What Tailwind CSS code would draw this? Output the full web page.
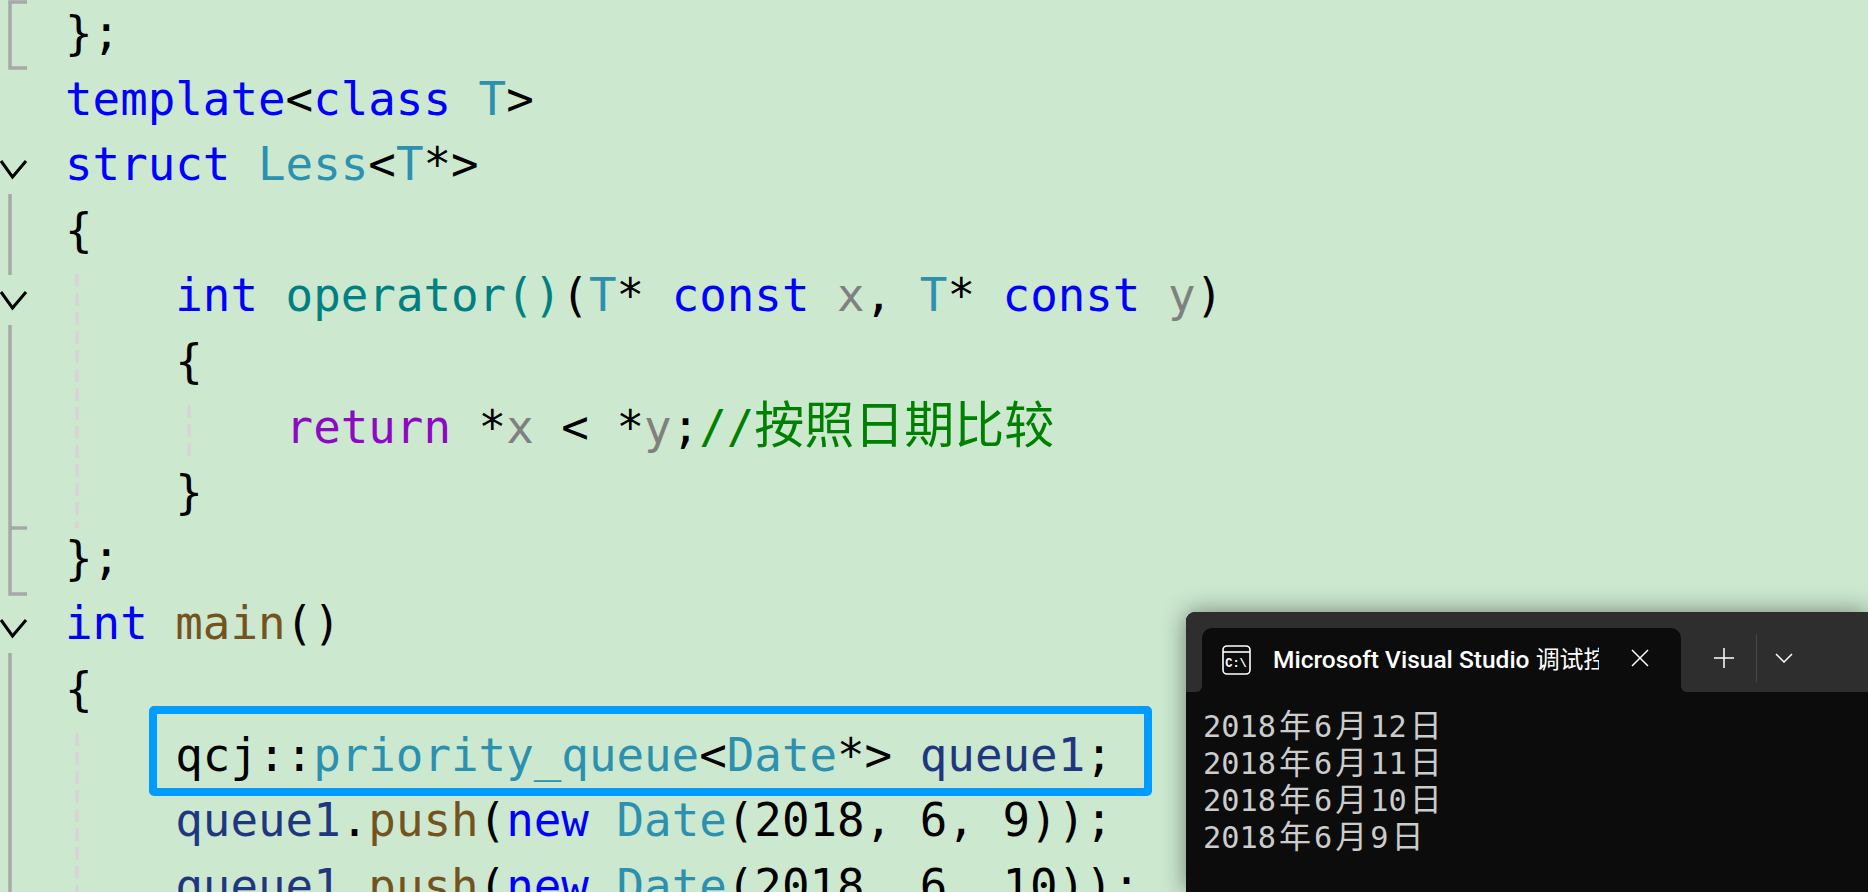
<!DOCTYPE html>
<html lang="zh">

<head>
    <meta charset="UTF-8">
    <title>priority_queue</title>
    <script src="https://cdn.jsdelivr.net/npm/@tailwindcss/browser@4"></script>
</head>

<body class="bg-[#cce8cf] h-screen overflow-hidden relative">
    <!-- Code -->
    <div class="flex flex-col pt-[1px] pl-[65px] font-['DejaVu_Sans_Mono','Noto_Sans_CJK_SC',monospace] text-[45.8px] leading-[65.6px] text-black whitespace-pre">
        <div class="h-[65.6px]">};</div>
        <div class="h-[65.6px]"><span class="text-[#0000ff]">template</span>&lt;<span class="text-[#0000ff]">class</span> <span class="text-[#2b91af]">T</span>&gt;</div>
        <div class="h-[65.6px]"><span class="text-[#0000ff]">struct</span> <span class="text-[#2b91af]">Less</span>&lt;<span class="text-[#2b91af]">T</span>*&gt;</div>
        <div class="h-[65.6px]">{</div>
        <div class="h-[65.6px]">    <span class="text-[#0000ff]">int</span> <span class="text-[#008080]">operator()</span>(<span class="text-[#2b91af]">T</span>* <span class="text-[#0000ff]">const</span> <span class="text-[#808080]">x</span>, <span class="text-[#2b91af]">T</span>* <span class="text-[#0000ff]">const</span> <span class="text-[#808080]">y</span>)</div>
        <div class="h-[65.6px]">    {</div>
        <div class="h-[65.6px]">        <span class="text-[#8f08c4]">return</span> *<span class="text-[#808080]">x</span> &lt; *<span class="text-[#808080]">y</span>;<span class="text-[#008000]">//<span class="font-['Noto_Sans_CJK_SC',sans-serif] text-[50px] leading-none">按照日期比较</span></span></div>
        <div class="h-[65.6px]">    }</div>
        <div class="h-[65.6px]">};</div>
        <div class="h-[65.6px]"><span class="text-[#0000ff]">int</span> <span class="text-[#74531f]">main</span>()</div>
        <div class="h-[65.6px]">{</div>
        <div class="h-[65.6px]">    qcj::<span class="text-[#2b91af]">priority_queue</span>&lt;<span class="text-[#2b91af]">Date</span>*&gt; <span class="text-[#1f377f]">queue1</span>;</div>
        <div class="h-[65.6px]">    <span class="text-[#1f377f]">queue1</span>.<span class="text-[#74531f]">push</span>(<span class="text-[#0000ff]">new</span> <span class="text-[#2b91af]">Date</span>(2018, 6, 9));</div>
        <div class="h-[65.6px]">    <span class="text-[#1f377f]">queue1</span>.<span class="text-[#74531f]">push</span>(<span class="text-[#0000ff]">new</span> <span class="text-[#2b91af]">Date</span>(2018, 6, 10));</div>
    </div>

    <!-- Fold margin and indent guides -->
    <svg class="absolute left-0 top-0" width="200" height="892" fill="none">
        <g stroke="#a8a8a8" stroke-width="3.5">
            <path d="M27 2H10V68H27" />
            <path d="M10 194V275" />
            <path d="M10 325V594H27M10 528H27" />
            <path d="M10 653V892" />
        </g>
        <g stroke="#000" stroke-width="3">
            <path d="M1 161L12.5 177L26 161" />
            <path d="M1 292L12.5 308L26 292" />
            <path d="M1 620L12.5 636L26 620" />
        </g>
        <g stroke="#d6d6d6" stroke-width="4" stroke-dasharray="13 6">
            <path d="M77 274V528" />
            <path d="M77 733V892" />
            <path d="M189 405V462" />
        </g>
    </svg>

    <!-- Highlight box -->
    <div class="absolute left-[149px] top-[706px] w-[1003px] h-[90px] border-[8px] border-[#009cff] rounded-[5px]"></div>

    <!-- Terminal window -->
    <div class="absolute left-[1186px] top-[612px] right-0 bottom-0 bg-[#0c0c0c] rounded-tl-[9px] shadow-[0_0_24px_rgba(0,0,0,0.45)] text-white">
        <div class="flex h-[80px]">
            <div class="w-[16px] bg-[#2e2e2e] rounded-tl-[9px] rounded-br-[6px]"></div>
            <div class="w-[479px] bg-[#2e2e2e]">
                <div class="mt-[16px] h-[64px] bg-[#0c0c0c] rounded-t-[10px] flex items-center pl-[20px]">
                    <svg width="29" height="30" viewBox="0 0 29 30" fill="none" stroke="#fff" stroke-width="1.6" class="shrink-0">
                        <rect x="1" y="1" width="27" height="28" rx="4" />
                        <path d="M1 7H28" />
                        <text x="14" y="21.5" text-anchor="middle" fill="#fff" stroke="none" font-family="Liberation Mono" font-weight="700" font-size="12">C:\</text>
                    </svg>
                    <div class="ml-[22px] w-[326px] overflow-hidden whitespace-nowrap font-['Roboto','Noto_Sans_CJK_SC',sans-serif] text-[24.5px] font-medium">Microsoft Visual Studio <span class="text-[24px] leading-none font-['Noto_Sans_CJK_SC',sans-serif] font-normal">调试控制台</span></div>
                    <svg width="18" height="18" viewBox="0 0 18 18" fill="none" stroke="#fff" stroke-width="1.5" class="ml-[32px] -mt-[4px]">
                        <path d="M1 1L17 17M17 1L1 17" />
                    </svg>
                </div>
            </div>
            <div class="flex-1 bg-[#2e2e2e] rounded-bl-[6px] flex items-center pt-[12px]">
                <svg width="20" height="20" viewBox="0 0 20 20" fill="none" stroke="#fff" stroke-width="1.5" class="ml-[33px]">
                    <path d="M10 0V20M0 10H20" />
                </svg>
                <div class="ml-[22px] h-[48px] w-[1px] bg-[#484848]"></div>
                <svg width="18" height="10" viewBox="0 0 18 10" fill="none" stroke="#fff" stroke-width="1.5" class="ml-[18px]">
                    <path d="M1 1L9 9L17 1" />
                </svg>
            </div>
        </div>
        <div class="flex flex-col pl-[17px] pt-[16px] font-['DejaVu_Sans_Mono','Noto_Sans_CJK_SC',monospace] text-[30.3px] leading-[37px] text-[#cccccc] whitespace-pre">
            <div class="h-[37px]">2018<span class="inline-block w-[38px] text-center text-[32px] leading-[30px] font-['Noto_Sans_CJK_SC',sans-serif]">年</span>6<span class="inline-block w-[38px] text-center text-[32px] leading-[30px] font-['Noto_Sans_CJK_SC',sans-serif]">月</span>12<span class="inline-block w-[38px] text-center text-[32px] leading-[30px] font-['Noto_Sans_CJK_SC',sans-serif]">日</span></div>
            <div class="h-[37px]">2018<span class="inline-block w-[38px] text-center text-[32px] leading-[30px] font-['Noto_Sans_CJK_SC',sans-serif]">年</span>6<span class="inline-block w-[38px] text-center text-[32px] leading-[30px] font-['Noto_Sans_CJK_SC',sans-serif]">月</span>11<span class="inline-block w-[38px] text-center text-[32px] leading-[30px] font-['Noto_Sans_CJK_SC',sans-serif]">日</span></div>
            <div class="h-[37px]">2018<span class="inline-block w-[38px] text-center text-[32px] leading-[30px] font-['Noto_Sans_CJK_SC',sans-serif]">年</span>6<span class="inline-block w-[38px] text-center text-[32px] leading-[30px] font-['Noto_Sans_CJK_SC',sans-serif]">月</span>10<span class="inline-block w-[38px] text-center text-[32px] leading-[30px] font-['Noto_Sans_CJK_SC',sans-serif]">日</span></div>
            <div class="h-[37px]">2018<span class="inline-block w-[38px] text-center text-[32px] leading-[30px] font-['Noto_Sans_CJK_SC',sans-serif]">年</span>6<span class="inline-block w-[38px] text-center text-[32px] leading-[30px] font-['Noto_Sans_CJK_SC',sans-serif]">月</span>9<span class="inline-block w-[38px] text-center text-[32px] leading-[30px] font-['Noto_Sans_CJK_SC',sans-serif]">日</span></div>
        </div>
    </div>
</body>

</html>
